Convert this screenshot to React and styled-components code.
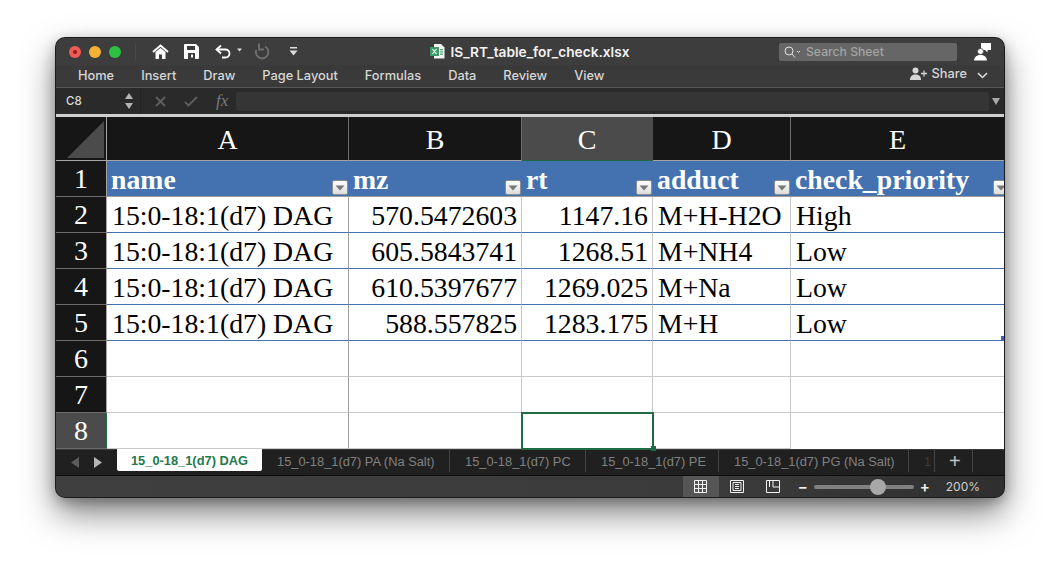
import React from "react";
import styled, { createGlobalStyle } from "styled-components";

const GlobalStyle = createGlobalStyle`
  html, body {
    margin: 0;
    padding: 0;
    background: #ffffff;
    font-family: "Inter", "Liberation Sans", sans-serif;
  }
`;

const Page = styled.div`
  width: 1060px;
  height: 572px;
  padding: 38px 0 0 56px;
  box-sizing: border-box;
  overflow: hidden;
`;

const Window = styled.div`
  width: 948px;
  height: 459px;
  border-radius: 9px;
  overflow: hidden;
  display: flex;
  flex-direction: column;
  background: #3a3a3a;
  box-shadow: 0 0 0 1px #1c1c1c, 0 16px 34px rgba(0, 0, 0, 0.5), 0 4px 14px rgba(0, 0, 0, 0.3);
`;

const TitleBar = styled.div`
  height: 27px;
  flex: none;
  display: grid;
  grid-template-columns: 1fr auto 1fr;
  align-items: center;
  background: #3d3d3d;
`;

const TitleLeft = styled.div`
  display: flex;
  align-items: center;
  padding-left: 13px;
`;

const Light = styled.span`
  position: relative;
  width: 12px;
  height: 12px;
  border-radius: 50%;
  margin-right: 8px;
  background: ${(props) => props.color};
  ${(props) =>
    props.$dot &&
    `&::after {
      content: "";
      position: absolute;
      left: 4px;
      top: 4px;
      width: 4px;
      height: 4px;
      border-radius: 50%;
      background: #8f1d18;
    }`}
`;

const Divider = styled.span`
  width: 1px;
  height: 16px;
  background: #484848;
  margin: 0 16px 0 6px;
`;

const QuickIcon = styled.span`
  display: flex;
  align-items: center;
  margin-right: ${(props) => props.gap}px;
`;

const FileTitle = styled.div`
  display: flex;
  align-items: center;
  gap: 5px;
  color: #f2f2f2;
  font-size: 13.7px;
  font-weight: 600;
`;

const TitleRight = styled.div`
  display: flex;
  align-items: center;
  justify-content: flex-end;
  padding-right: 13px;
`;

const SearchBox = styled.div`
  width: 178px;
  height: 18px;
  background: #666666;
  border-radius: 2px;
  display: flex;
  align-items: center;
  gap: 5px;
  padding-left: 5px;
  box-sizing: border-box;
  color: #a3a3a3;
  font-size: 12.2px;
  font-weight: 500;
  margin-right: 17px;
`;

const Ribbon = styled.div`
  height: 23px;
  flex: none;
  display: flex;
  align-items: center;
  padding: 0 16px 2px 22px;
  box-sizing: border-box;
  gap: 27px;
  background: #3a3a3a;
  border-bottom: 1px solid #585858;
`;

const RibbonTab = styled.span`
  color: #d6d6d6;
  font-size: 12.8px;
  font-weight: 500;
`;

const Share = styled.div`
  margin-left: auto;
  padding-bottom: 3px;
  display: flex;
  align-items: center;
  gap: 4px;
  color: #d6d6d6;
  font-size: 12.8px;
  font-weight: 500;
`;

const ShareChevron = styled.span`
  display: flex;
  margin-left: 6px;
  padding-top: 3px;
`;

const FormulaBar = styled.div`
  height: 26px;
  flex: none;
  display: flex;
  align-items: center;
  background: #2a2a2a;
`;

const NameBox = styled.div`
  width: 85px;
  height: 100%;
  padding: 0 7px 0 10px;
  box-sizing: border-box;
  display: flex;
  align-items: center;
  justify-content: space-between;
  color: #d8d8d8;
  font-size: 11.5px;
  font-weight: 500;
  border-right: 1px solid #222222;
`;

const FormulaTools = styled.div`
  width: 95px;
  display: flex;
  align-items: center;
  padding-left: 14px;
  gap: 18px;
  box-sizing: border-box;
`;

const FxLabel = styled.span`
  color: #7a7a7a;
  font-family: "Liberation Serif", serif;
  font-style: italic;
  font-size: 17px;
`;

const FormulaInput = styled.div`
  width: 753px;
  height: 19px;
  background: #353535;
  border-radius: 2px;
`;

const FormulaArrow = styled.span`
  margin-left: 3px;
  display: flex;
`;

const SheetEdge = styled.div`
  height: 3px;
  flex: none;
  background: #cfcfcf;
`;

const Sheet = styled.div`
  flex: none;
  display: grid;
  grid-template-columns: 51px 242px 173px 131px 138px 213px;
  grid-template-rows: 44px repeat(8, 36px);
  background: #ffffff;
  font-family: "Liberation Serif", "Times New Roman", serif;
`;

const Corner = styled.div`
  background: #161616;
  border-right: 1px solid #a5a5a5;
  border-bottom: 1px solid #a5a5a5;
  display: flex;
  align-items: flex-end;
  justify-content: flex-end;
  padding: 0 2px 2px 0;
`;

const ColHead = styled.div`
  display: flex;
  align-items: center;
  justify-content: center;
  padding-top: 2px;
  box-sizing: border-box;
  color: #ffffff;
  font-size: 28px;
  background: ${(props) => (props.$active ? "#4b4b4b" : "#161616")};
  border-right: 1px solid ${(props) => (props.$active ? "#4b4b4b" : "#6c6c6c")};
  border-bottom: 1px solid ${(props) => (props.$active ? "#1f6b43" : "#a5a5a5")};
  ${(props) => props.$last && "border-right: none;"}
`;

const RowHead = styled.div`
  display: flex;
  align-items: center;
  justify-content: center;
  padding-top: 1px;
  box-sizing: border-box;
  color: #ffffff;
  font-size: 28px;
  background: ${(props) => (props.$active ? "#4b4b4b" : "#161616")};
  border-right: 1px solid ${(props) => (props.$active ? "#1f6b43" : "#a5a5a5")};
  border-bottom: 1px solid #6c6c6c;
`;

const HeadCell = styled.div`
  position: relative;
  overflow: hidden;
  background: #4472b0;
  color: #ffffff;
  font-size: 27.75px;
  font-weight: bold;
  line-height: 38px;
  padding-left: 4px;
  border-bottom: 1px solid #9c9c9c;
`;

const FilterButton = styled.span`
  position: absolute;
  right: ${(props) => props.$right}px;
  bottom: 1px;
  width: 16px;
  height: 15px;
  box-sizing: border-box;
  background: linear-gradient(#ffffff, #dcdcdc);
  border: 1px solid #8d8d8d;
  border-radius: 2px;
  display: flex;
  align-items: center;
  justify-content: center;
`;

const Cell = styled.div`
  overflow: hidden;
  color: #000000;
  font-size: 27.75px;
  line-height: 38px;
  white-space: nowrap;
  padding: 0 ${(props) => (props.$num ? "4px" : "0")} 0 ${(props) => (props.$num ? "0" : "5px")};
  text-align: ${(props) => (props.$num ? "right" : "left")};
  background: #ffffff;
  box-sizing: border-box;
  position: relative;
  border-right: 1px solid ${(props) => (props.$first ? "#a0a0a0" : "#c8c8c8")};
  border-bottom: 1px solid ${(props) => (props.$data ? "#4472b0" : "#c8c8c8")};
  ${(props) => props.$last && "border-right: none;"}
`;

const EmptyLastCell = styled.div`
  background: #ffffff;
  ${(props) => !props.$end && "border-bottom: 1px solid #c8c8c8;"}
`;

const Selection = styled.div`
  position: relative;
  z-index: 1;
  margin: -1px;
  border: 2px solid #1f6b43;
  background: #ffffff;
`;

const SelectionHandle = styled.span`
  position: absolute;
  right: -4px;
  bottom: -3px;
  width: 5px;
  height: 5px;
  background: #1f6b43;
`;

const TableHandle = styled.span`
  position: absolute;
  right: 0;
  bottom: 0;
  width: 3px;
  height: 4px;
  background: #3f5fb5;
`;

const TabBar = styled.div`
  height: 27px;
  flex: none;
  display: flex;
  background: #202020;
  border-bottom: 1px solid #0c0c0c;
  box-sizing: border-box;
  border-top: 1px solid #3a3a3a;
`;

const TabNav = styled.div`
  width: 61px;
  display: flex;
  align-items: center;
  padding-left: 15px;
  gap: 15px;
  box-sizing: border-box;
`;

const ActiveTab = styled.div`
  width: 145px;
  height: 22px;
  background: #ffffff;
  margin-top: -1px;
  padding-top: 1px;
  box-sizing: border-box;
  border-radius: 0 0 2px 2px;
  display: flex;
  align-items: center;
  justify-content: center;
  color: #1f7a4c;
  font-family: "Liberation Sans", sans-serif;
  font-size: 12.85px;
  font-weight: bold;
`;

const SheetTab = styled.div`
  width: ${(props) => props.$width}px;
  height: 22px;
  display: flex;
  align-items: center;
  padding-left: 15px;
  color: ${(props) => (props.$faded ? "#3c3c3c" : "#808080")};
  font-family: "Liberation Sans", sans-serif;
  font-size: 12.85px;
  box-sizing: border-box;
  border-right: 1px solid #454545;
  white-space: nowrap;
  flex: none;
`;

const AddTab = styled(SheetTab)`
  color: #c4c4c4;
  font-size: 20px;
  padding-left: 14px;
`;

const StatusBar = styled.div`
  flex: 1;
  display: flex;
  align-items: stretch;
  justify-content: flex-end;
  background: linear-gradient(90deg, #3f3f3f 0%, #3b3b3b 70%, #2f2f2f 100%);
  padding-right: 24px;
`;

const ViewButton = styled.div`
  width: 36px;
  display: flex;
  align-items: center;
  justify-content: center;
  background: ${(props) => (props.$active ? "#555555" : "transparent")};
`;

const Zoom = styled.div`
  display: flex;
  align-items: center;
  margin-left: 7px;
  color: #d0d0d0;
  font-size: 12px;
`;

const ZoomSign = styled.span`
  width: 9px;
  text-align: center;
  color: #f0f0f0;
  font-size: 15px;
  font-weight: 600;
  line-height: 1;
`;

const SliderTrack = styled.div`
  position: relative;
  width: 100px;
  height: 4px;
  margin: 0 6px 0 7px;
  border-radius: 2px;
  background: #808080;
`;

const SliderKnob = styled.span`
  position: absolute;
  left: 56px;
  top: -6px;
  width: 16px;
  height: 16px;
  border-radius: 50%;
  background: #a8a8a8;
`;

const ZoomValue = styled.span`
  margin-left: 17px;
`;

const columns = ["A", "B", "C", "D", "E"];
const headers = ["name", "mz", "rt", "adduct", "check_priority"];
const rows = [
  ["15:0-18:1(d7) DAG", "570.5472603", "1147.16", "M+H-H2O", "High"],
  ["15:0-18:1(d7) DAG", "605.5843741", "1268.51", "M+NH4", "Low"],
  ["15:0-18:1(d7) DAG", "610.5397677", "1269.025", "M+Na", "Low"],
  ["15:0-18:1(d7) DAG", "588.557825", "1283.175", "M+H", "Low"],
];
const ribbonTabs = ["Home", "Insert", "Draw", "Page Layout", "Formulas", "Data", "Review", "View"];
const sheetTabs = [
  { name: "15_0-18_1(d7) PA (Na Salt)", width: 188 },
  { name: "15_0-18_1(d7) PC", width: 136 },
  { name: "15_0-18_1(d7) PE", width: 133 },
  { name: "15_0-18_1(d7) PG (Na Salt)", width: 190 },
];

function FilterArrow() {
  return (
    <svg width="10" height="6" viewBox="0 0 10 6">
      <path d="M0.5 0.5H9.5L5 5.5Z" fill="#777" />
    </svg>
  );
}

function HomeIcon() {
  return (
    <svg width="17" height="16" viewBox="0 0 17 16" fill="none">
      <path d="M1 8L8.5 1.5L16 8" stroke="#fff" strokeWidth="2" />
      <path d="M3.5 8V15H7V10.5H10V15H13.5V8L8.5 4Z" fill="#fff" />
    </svg>
  );
}

function SaveIcon() {
  return (
    <svg width="15" height="15" viewBox="0 0 15 15">
      <path
        fillRule="evenodd"
        d="M1 0H12L15 3V14A1 1 0 0 1 14 15H1A1 1 0 0 1 0 14V1A1 1 0 0 1 1 0ZM3 2V6H11V2ZM4 9V15H11V9Z"
        fill="#fff"
      />
      <rect x="7" y="10.5" width="2" height="3" fill="#fff" />
    </svg>
  );
}

function UndoIcon() {
  return (
    <svg width="28" height="15" viewBox="0 0 28 15" fill="none">
      <path d="M6 1.5L1.5 5.5L6 9.5" stroke="#fff" strokeWidth="1.8" />
      <path d="M2 5.5H10.5A4 4 0 0 1 10.5 13.5H7" stroke="#fff" strokeWidth="1.8" />
      <path d="M22 4.5H27L24.5 7.5Z" fill="#ddd" />
    </svg>
  );
}

function RedoIcon() {
  return (
    <svg width="16" height="17" viewBox="0 0 16 17" fill="none">
      <path d="M5 0.5V6.5H10" stroke="#6f6f6f" strokeWidth="1.9" />
      <path d="M11 3.5A6.3 6.3 0 1 1 2.2 7" stroke="#6f6f6f" strokeWidth="1.9" />
    </svg>
  );
}

function CustomizeIcon() {
  return (
    <svg width="9" height="9" viewBox="0 0 9 9">
      <rect x="1" y="0" width="7" height="1.5" fill="#ddd" />
      <path d="M0.5 3.5H8.5L4.5 8.5Z" fill="#ddd" />
    </svg>
  );
}

function ExcelIcon() {
  return (
    <svg width="15" height="15" viewBox="0 0 15 15">
      <path d="M4 0H11L14.5 3.5V14.5H4Z" fill="#f4f4f4" />
      <rect x="10" y="5" width="3" height="1.2" fill="#4d9a73" />
      <rect x="10" y="7.3" width="3" height="1.2" fill="#4d9a73" />
      <rect x="10" y="9.6" width="3" height="1.2" fill="#4d9a73" />
      <rect x="0" y="3" width="9" height="9" fill="#3f9a6b" />
      <path d="M2.5 5L6.5 10M6.5 5L2.5 10" stroke="#fff" strokeWidth="1.1" />
    </svg>
  );
}

function SearchIcon() {
  return (
    <svg width="17" height="12" viewBox="0 0 17 12" fill="none">
      <circle cx="5" cy="5" r="4" stroke="#e0e0e0" />
      <path d="M8 8L11 11.5" stroke="#e0e0e0" />
      <path d="M13 5L14.5 6.5L16 5" stroke="#e0e0e0" />
    </svg>
  );
}

function CommentIcon() {
  return (
    <svg width="17" height="19" viewBox="0 0 17 19">
      <path d="M7 1H17V8H13.5V10.5L11 8H7Z" fill="#fff" />
      <circle cx="6.5" cy="9.5" r="3" fill="#fff" stroke="#3d3d3d" strokeWidth="0.8" />
      <path d="M0 18.5C0.5 14.5 3 13 6.5 13C10 13 12.5 14.5 13 18.5Z" fill="#fff" />
    </svg>
  );
}

function AddPersonIcon() {
  return (
    <svg width="18" height="13" viewBox="0 0 18 13">
      <circle cx="5.5" cy="3.5" r="3" fill="#d6d6d6" />
      <path d="M0 13C0 9 2.5 7.5 5.5 7.5C8.5 7.5 11 9 11 13Z" fill="#d6d6d6" />
      <path d="M11 6.5H17M14 3.5V9.5" stroke="#d6d6d6" strokeWidth="1.3" />
    </svg>
  );
}

function ChevronIcon() {
  return (
    <svg width="11" height="7" viewBox="0 0 11 7" fill="none">
      <path d="M1 1.2L5.5 5.5L10 1.2" stroke="#d6d6d6" strokeWidth="1.6" />
    </svg>
  );
}

function Spinner() {
  return (
    <svg width="8" height="18" viewBox="0 0 8 18">
      <path d="M4 1L8 7H0Z" fill="#b5b5b5" />
      <path d="M4 17L0 11H8Z" fill="#b5b5b5" />
    </svg>
  );
}

function CancelIcon() {
  return (
    <svg width="11" height="11" viewBox="0 0 11 11" fill="none">
      <path d="M1 1L10 10M10 1L1 10" stroke="#5e5e5e" strokeWidth="1.8" />
    </svg>
  );
}

function CheckIcon() {
  return (
    <svg width="14" height="11" viewBox="0 0 14 11" fill="none">
      <path d="M1 6L4.5 9.5L13 1" stroke="#5e5e5e" strokeWidth="1.8" />
    </svg>
  );
}

function TriangleDown() {
  return (
    <svg width="8" height="8" viewBox="0 0 8 8">
      <path d="M0 1H8L4 8Z" fill="#aaa" />
    </svg>
  );
}

function NavArrow({ left, color }) {
  return (
    <svg width="8" height="11" viewBox="0 0 8 11">
      <path d={left ? "M8 0V11L0 5.5Z" : "M0 0V11L8 5.5Z"} fill={color} />
    </svg>
  );
}

function CornerTriangle() {
  return (
    <svg width="37" height="37" viewBox="0 0 37 37">
      <path d="M37 0V37H0Z" fill="#4b4b4b" />
    </svg>
  );
}

function NormalViewIcon() {
  return (
    <svg width="13" height="13" viewBox="0 0 13 13" fill="none" stroke="#f2f2f2">
      <path d="M0.5 0.5H12.5V12.5H0.5ZM4.5 0.5V12.5M8.5 0.5V12.5M0.5 4.5H12.5M0.5 8.5H12.5" />
    </svg>
  );
}

function PageViewIcon() {
  return (
    <svg width="14" height="13" viewBox="0 0 14 13" fill="none" stroke="#f2f2f2">
      <path d="M0.5 0.5H13.5V12.5H0.5ZM3 2.5H11V10.5H3ZM5 4.5H9M5 6.5H9M5 8.5H9" />
    </svg>
  );
}

function BreakViewIcon() {
  return (
    <svg width="14" height="13" viewBox="0 0 14 13" fill="none" stroke="#f2f2f2">
      <path d="M0.5 0.5H13.5V12.5H0.5ZM7 0.5V7H13.5M3.5 0.5V7" />
    </svg>
  );
}

export default function App() {
  return (
    <Page>
      <GlobalStyle />
      <Window>
        <TitleBar>
          <TitleLeft>
            <Light color="#ef5b57" $dot />
            <Light color="#f5b335" />
            <Light color="#2dbf41" />
            <Divider />
            <QuickIcon gap={15}><HomeIcon /></QuickIcon>
            <QuickIcon gap={16}><SaveIcon /></QuickIcon>
            <QuickIcon gap={11}><UndoIcon /></QuickIcon>
            <QuickIcon gap={19}><RedoIcon /></QuickIcon>
            <QuickIcon gap={0}><CustomizeIcon /></QuickIcon>
          </TitleLeft>
          <FileTitle>
            <ExcelIcon />
            IS_RT_table_for_check.xlsx
          </FileTitle>
          <TitleRight>
            <SearchBox>
              <SearchIcon />
              Search Sheet
            </SearchBox>
            <CommentIcon />
          </TitleRight>
        </TitleBar>

        <Ribbon>
          {ribbonTabs.map((tab) => (
            <RibbonTab key={tab}>{tab}</RibbonTab>
          ))}
          <Share>
            <AddPersonIcon />
            Share
            <ShareChevron><ChevronIcon /></ShareChevron>
          </Share>
        </Ribbon>

        <FormulaBar>
          <NameBox>
            C8
            <Spinner />
          </NameBox>
          <FormulaTools>
            <CancelIcon />
            <CheckIcon />
            <FxLabel>fx</FxLabel>
          </FormulaTools>
          <FormulaInput />
          <FormulaArrow><TriangleDown /></FormulaArrow>
        </FormulaBar>

        <SheetEdge />

        <Sheet>
          <Corner><CornerTriangle /></Corner>
          {columns.map((col, i) => (
            <ColHead key={col} $active={col === "C"} $last={i === 4}>{col}</ColHead>
          ))}

          <RowHead>1</RowHead>
          {headers.map((header, i) => (
            <HeadCell key={header}>
              {header}
              <FilterButton $right={i === 4 ? -5 : 1}><FilterArrow /></FilterButton>
            </HeadCell>
          ))}

          {rows.map((row, r) => (
            <React.Fragment key={r}>
              <RowHead>{r + 2}</RowHead>
              {row.map((value, c) => (
                <Cell key={c} $data $first={c === 0} $num={c === 1 || c === 2} $last={c === 4}>
                  {value}
                  {r === 3 && c === 4 && <TableHandle />}
                </Cell>
              ))}
            </React.Fragment>
          ))}

          {[6, 7].map((n) => (
            <React.Fragment key={n}>
              <RowHead>{n}</RowHead>
              <Cell $first />
              <Cell />
              <Cell />
              <Cell />
              <EmptyLastCell />
            </React.Fragment>
          ))}

          <RowHead $active>8</RowHead>
          <Cell $first />
          <Cell />
          <Selection><SelectionHandle /></Selection>
          <Cell />
          <EmptyLastCell $end />
        </Sheet>

        <TabBar>
          <TabNav>
            <NavArrow left color="#5c5c5c" />
            <NavArrow color="#b5b5b5" />
          </TabNav>
          <ActiveTab>15_0-18_1(d7) DAG</ActiveTab>
          {sheetTabs.map((tab) => (
            <SheetTab key={tab.name} $width={tab.width}>{tab.name}</SheetTab>
          ))}
          <SheetTab $width={26} $faded>1</SheetTab>
          <AddTab $width={38}>+</AddTab>
        </TabBar>

        <StatusBar>
          <ViewButton $active><NormalViewIcon /></ViewButton>
          <ViewButton><PageViewIcon /></ViewButton>
          <ViewButton><BreakViewIcon /></ViewButton>
          <Zoom>
            <ZoomSign>−</ZoomSign>
            <SliderTrack><SliderKnob /></SliderTrack>
            <ZoomSign>+</ZoomSign>
            <ZoomValue>200%</ZoomValue>
          </Zoom>
        </StatusBar>
      </Window>
    </Page>
  );
}
